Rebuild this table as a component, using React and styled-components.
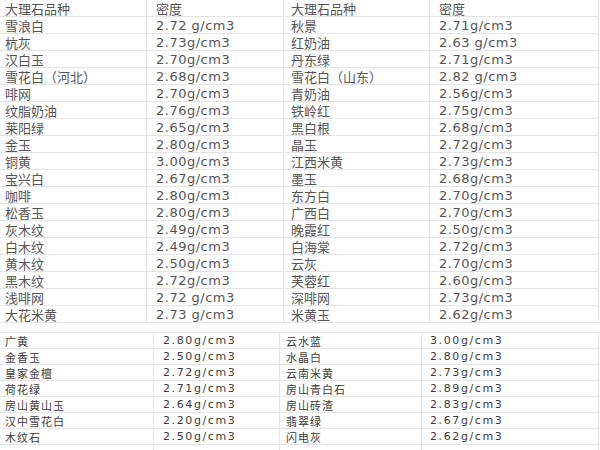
import React from 'react'
import styled, { createGlobalStyle } from 'styled-components'

let Global = createGlobalStyle`
  * {
    margin: 0;
    padding: 0;
    box-sizing: border-box;
  }
  body {
    background: #fff;
  }
`

let Page = styled.div`
  width: 600px;
  height: 450px;
  overflow: hidden;
  background: #fff;
`

let Grid = styled.div`
  display: grid;
  grid-template-columns: ${p => p.cols};
  grid-auto-rows: ${p => p.rowH}px;
  margin-top: ${p => p.top || 0}px;
  border-top: ${p => (p.bordered ? '1px solid #e4e4e4' : 'none')};
`

let spacing = p => {
  if (p.small) return p.num ? 1.6 : 1
  return p.num ? 0.5 : 0
}

let Cell = styled.div`
  border-right: 1px solid #e4e4e4;
  border-bottom: 1px solid #e4e4e4;
  padding-left: ${p => p.pad}px;
  display: flex;
  align-items: center;
  white-space: nowrap;
  overflow: hidden;
  font-family: "DejaVu Sans", "Noto Sans CJK SC", sans-serif;
  font-size: ${p => (p.small ? 11 : 13)}px;
  letter-spacing: ${p => spacing(p)}px;
  color: ${p => (p.small ? '#3c3c3c' : '#555')};
`

let top = [
  ['大理石品种', '密度', '大理石品种', '密度'],
  ['雪浪白', '2.72 g/cm3', '秋景', '2.71g/cm3'],
  ['杭灰', '2.73g/cm3', '红奶油', '2.63 g/cm3'],
  ['汉白玉', '2.70g/cm3', '丹东绿', '2.71g/cm3'],
  ['雪花白（河北）', '2.68g/cm3', '雪花白（山东）', '2.82 g/cm3'],
  ['啡网', '2.70g/cm3', '青奶油', '2.56g/cm3'],
  ['纹脂奶油', '2.76g/cm3', '铁岭红', '2.75g/cm3'],
  ['莱阳绿', '2.65g/cm3', '黑白根', '2.68g/cm3'],
  ['金玉', '2.80g/cm3', '晶玉', '2.72g/cm3'],
  ['铜黄', '3.00g/cm3', '江西米黄', '2.73g/cm3'],
  ['宝兴白', '2.67g/cm3', '墨玉', '2.68g/cm3'],
  ['咖啡', '2.80g/cm3', '东方白', '2.70g/cm3'],
  ['松香玉', '2.80g/cm3', '广西白', '2.70g/cm3'],
  ['灰木纹', '2.49g/cm3', '晚霞红', '2.50g/cm3'],
  ['白木纹', '2.49g/cm3', '白海棠', '2.72g/cm3'],
  ['黄木纹', '2.50g/cm3', '云灰', '2.70g/cm3'],
  ['黑木纹', '2.72g/cm3', '芙蓉红', '2.60g/cm3'],
  ['浅啡网', '2.72 g/cm3', '深啡网', '2.73g/cm3'],
  ['大花米黄', '2.73 g/cm3', '米黄玉', '2.62g/cm3'],
]

let bottom = [
  ['广黄', '2.80g/cm3', '云水蓝', '3.00g/cm3'],
  ['金香玉', '2.50g/cm3', '水晶白', '2.80g/cm3'],
  ['皇家金檀', '2.72g/cm3', '云南米黄', '2.73g/cm3'],
  ['荷花绿', '2.71g/cm3', '房山青白石', '2.89g/cm3'],
  ['房山黄山玉', '2.64g/cm3', '房山砖渣', '2.83g/cm3'],
  ['汉中雪花白', '2.20g/cm3', '翡翠绿', '2.67g/cm3'],
  ['木纹石', '2.50g/cm3', '闪电灰', '2.62g/cm3'],
  ['', '', '', ''],
]

let topPad = [5, 9, 7, 9]
let bottomPad = [5, 9, 6, 8]

export default function App () {
  return (
    <Page>
      <Global />
      <Grid cols="147px 137px 146px 169px" rowH={17}>
        {top.map((row, i) => row.map((x, j) => (
          <Cell key={i + '-' + j} pad={topPad[j]} num={i > 0 && j % 2 === 1}>{x}</Cell>
        )))}
      </Grid>
      <Grid cols="154px 126px 142px 177px" rowH={16} top={9} bordered>
        {bottom.map((row, i) => row.map((x, j) => (
          <Cell key={i + '-' + j} pad={bottomPad[j]} small num={j % 2 === 1}>{x}</Cell>
        )))}
      </Grid>
    </Page>
  )
}
